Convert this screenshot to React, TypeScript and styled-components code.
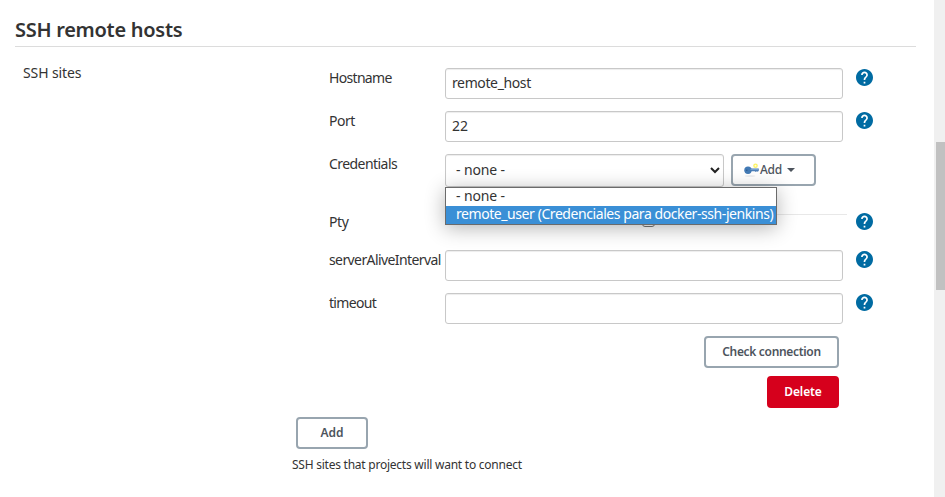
import React from "react";
import styled, { createGlobalStyle } from "styled-components";

const GlobalStyle = createGlobalStyle`
  *, *::before, *::after { box-sizing: border-box; }
  body { margin: 0; background: #fff; overflow: hidden; }
`;

const Page = styled.div`
  display: flex;
  width: 945px;
  height: 497px;
  background: #fff;
  color: #333;
  font: 14px/20px "Noto Sans", "Open Sans", sans-serif;
`;

const Main = styled.main`
  flex: 1;
  padding: 14px 18px 0 15px;
`;

const ScrollTrack = styled.aside`
  width: 11px;
  padding: 142px 0 0 2px;
  background: #f0f0f0;
`;

const ScrollThumb = styled.div`
  height: 148px;
  background: #c1c1c1;
`;

const Heading = styled.h1`
  height: 33px;
  margin: 0;
  border-bottom: 1px solid #dcdcdc;
  font-size: 20px;
  font-weight: 600;
  letter-spacing: -0.28px;
  line-height: 32px;
  white-space: nowrap;
`;

const Section = styled.section`
  display: grid;
  grid-template-columns: 277px 1fr;
`;

const SectionLabel = styled.div`
  padding: 16px 0 0 8px;
  letter-spacing: -0.12px;
`;

const Fields = styled.div`
  padding: 21px 0 0 37px;
`;

const Row = styled.div<{ $height: number }>`
  display: grid;
  grid-template-columns: 116px 411px 20px;
  height: ${(p) => p.$height}px;
`;

const Label = styled.label<{ $spacing: number }>`
  letter-spacing: ${(p) => p.$spacing}px;
  white-space: nowrap;
`;

const Input = styled.input<{ $spacing?: number }>`
  width: 398px;
  height: 31px;
  padding: 0 6px 2px;
  border: 1px solid #c8c8c8;
  border-radius: 3px;
  background: #fff;
  box-shadow: inset 0 1px 1px rgba(0, 0, 0, 0.075);
  color: #333;
  font: inherit;
  letter-spacing: ${(p) => p.$spacing ?? 0}px;
`;

const Help = styled.svg`
  display: block;
  width: 17px;
  height: 17px;
  margin: 1px 0 0;
`;

const SelectLine = styled.div`
  display: flex;
  gap: 7px;
`;

const SelectWrap = styled.div`
  position: relative;
  width: 279px;
`;

const SelectBox = styled.div`
  display: flex;
  align-items: center;
  justify-content: space-between;
  height: 33px;
  padding: 0 2px 1px 10px;
  border: 1px solid #c8c8c8;
  border-radius: 3px;
  box-shadow: inset 0 1px 1px rgba(0, 0, 0, 0.075);
  letter-spacing: -0.12px;
`;

const Menu = styled.div`
  position: absolute;
  z-index: 2;
  top: 33px;
  left: 0;
  width: 332px;
  height: 38px;
  border: 1px solid #6b6b6b;
  background: #fff;
  box-shadow: 0 3px 20px rgba(0, 0, 0, 0.3);
`;

const Option = styled.div<{ $active?: boolean }>`
  height: 18px;
  padding-left: 10px;
  background: ${(p) => (p.$active ? "#3a8fd6" : "#fff")};
  color: ${(p) => (p.$active ? "#fff" : "#333")};
  letter-spacing: ${(p) => (p.$active ? -0.43 : -0.12)}px;
  line-height: 16px;
  white-space: nowrap;
`;

const Button = styled.button<{ $width: number; $danger?: boolean; $spacing?: number }>`
  display: flex;
  align-items: center;
  justify-content: center;
  width: ${(p) => p.$width}px;
  height: 32px;
  padding: 0;
  border: 2px solid ${(p) => (p.$danger ? "#d6001c" : "#98a5af")};
  border-radius: 4px;
  background: ${(p) => (p.$danger ? "#d6001c" : "#fff")};
  color: ${(p) => (p.$danger ? "#fff" : "#4d545d")};
  font: 600 12px/16px "Noto Sans", "Open Sans", sans-serif;
  letter-spacing: ${(p) => p.$spacing ?? -0.1}px;
`;

const AddCredentials = styled(Button)`
  justify-content: flex-start;
  padding-left: 11px;
  font-weight: 500;
`;

const Caret = styled.span`
  margin-left: 5px;
  border: 4px solid transparent;
  border-top-color: #4d545d;
  border-bottom: 0;
`;

const CheckCell = styled.div`
  width: 402px;
  height: 18px;
  margin-top: 2px;
  padding-left: 197px;
  border-top: 1px solid #e8e8e8;
`;

const Checkbox = styled.div`
  width: 13px;
  height: 12px;
  border: 1px solid #767676;
  border-radius: 3px;
`;

const Actions = styled.div`
  display: flex;
  flex-direction: column;
  align-items: flex-end;
  gap: 8px;
  width: 510px;
`;

const Footer = styled.div`
  margin: 9px 0 0 -33px;
`;

const Hint = styled.p`
  margin: 6px 0 0 -4px;
  font-size: 12px;
  letter-spacing: -0.24px;
  white-space: nowrap;
`;

const HelpIcon = () => (
  <Help viewBox="2 2 20 20" aria-label="Help">
    <path
      fill="#006ba2"
      d="M12 2C6.48 2 2 6.48 2 12s4.48 10 10 10 10-4.48 10-10S17.52 2 12 2zm1 17h-2v-2h2v2zm2.07-7.75l-.9.92C13.45 12.9 13 13.5 13 15h-2v-.5c0-1.1.45-2.1 1.17-2.83l1.24-1.26c.37-.36.59-.86.59-1.41 0-1.1-.9-2-2-2s-2 .9-2 2H8c0-2.21 1.79-4 4-4s4 1.79 4 4c0 .88-.36 1.68-.93 2.25z"
    />
  </Help>
);

const KeyIcon = () => (
  <svg width="16" height="16" viewBox="0 0 16 16">
    <ellipse cx="6" cy="14" rx="5.5" ry="0.8" fill="#e8eaed" />
    <circle cx="11.5" cy="3.7" r="2.3" fill="#fcf35f" />
    <circle cx="11.5" cy="3.7" r="1" fill="#fffde0" />
    <path d="M6 6.5h8.8v2.2l-1 1.1-1-.6-1 .8-1-.8H6z" fill="#4d7fb8" />
    <ellipse cx="4" cy="8.2" rx="3.7" ry="3.7" fill="#427ab5" />
    <path d="M6.5 7.4h7.5" stroke="#86aed8" strokeWidth=".8" />
    <circle cx="2.8" cy="8.2" r=".8" fill="#2d5b91" />
  </svg>
);

const Chevron = () => (
  <svg width="12" height="12" viewBox="0 0 12 12">
    <path d="M2 4l4 4 4-4" fill="none" stroke="#222" strokeWidth="2" />
  </svg>
);

export default function App() {
  return (
    <>
      <GlobalStyle />
      <Page>
        <Main>
          <Heading>SSH remote hosts</Heading>
          <Section>
            <SectionLabel>SSH sites</SectionLabel>
            <Fields>
              <Row $height={43}>
                <Label $spacing={-0.68}>Hostname</Label>
                <Input $spacing={-0.38} defaultValue="remote_host" />
                <HelpIcon />
              </Row>
              <Row $height={43}>
                <Label $spacing={-0.5}>Port</Label>
                <Input defaultValue="22" />
                <HelpIcon />
              </Row>
              <Row $height={58}>
                <Label $spacing={-0.56}>Credentials</Label>
                <SelectLine>
                  <SelectWrap>
                    <SelectBox>- none - <Chevron /></SelectBox>
                    <Menu>
                      <Option>- none -</Option>
                      <Option $active>remote_user (Credenciales para docker-ssh-jenkins)</Option>
                    </Menu>
                  </SelectWrap>
                  <AddCredentials $width={85} $spacing={-0.3}><KeyIcon />Add<Caret /></AddCredentials>
                </SelectLine>
              </Row>
              <Row $height={38}>
                <Label $spacing={-0.4}>Pty</Label>
                <CheckCell><Checkbox /></CheckCell>
                <HelpIcon />
              </Row>
              <Row $height={43}>
                <Label $spacing={-0.6}>serverAliveInterval</Label>
                <Input />
                <HelpIcon />
              </Row>
              <Row $height={43}>
                <Label $spacing={-0.68}>timeout</Label>
                <Input />
                <HelpIcon />
              </Row>
              <Actions>
                <Button $width={135} $spacing={-0.32}>Check connection</Button>
                <Button $width={72} $danger>Delete</Button>
              </Actions>
              <Footer>
                <Button $width={72}>Add</Button>
                <Hint>SSH sites that projects will want to connect</Hint>
              </Footer>
            </Fields>
          </Section>
        </Main>
        <ScrollTrack><ScrollThumb /></ScrollTrack>
      </Page>
    </>
  );
}
